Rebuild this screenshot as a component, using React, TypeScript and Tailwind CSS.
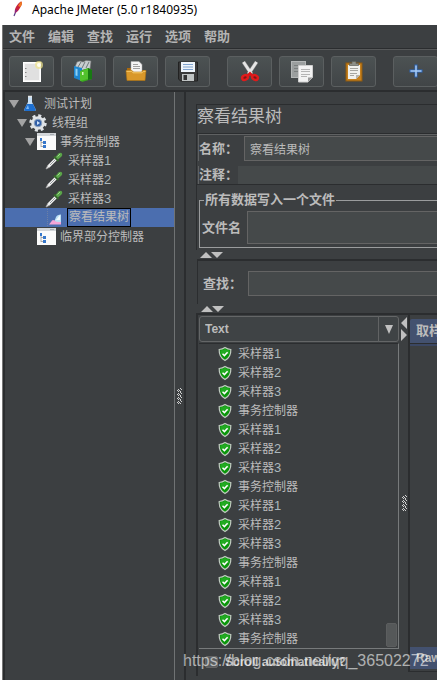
import React, { Fragment } from 'react'

interface TreeItem {
    label: string
    num?: string
    depth: number
    icon: 'flask' | 'gear' | 'controller' | 'dropper' | 'chart'
    open?: boolean
    selected?: boolean
}

const indents = ['pl-1', 'pl-3', 'pl-5', 'pl-7']

const treeItems: TreeItem[] = [
    { label: '测试计划', depth: 0, icon: 'flask', open: true },
    { label: '线程组', depth: 1, icon: 'gear', open: true },
    { label: '事务控制器', depth: 2, icon: 'controller', open: true },
    { label: '采样器', num: '1', depth: 3, icon: 'dropper' },
    { label: '采样器', num: '2', depth: 3, icon: 'dropper' },
    { label: '采样器', num: '3', depth: 3, icon: 'dropper' },
    { label: '察看结果树', depth: 3, icon: 'chart', selected: true },
    { label: '临界部分控制器', depth: 2, icon: 'controller' },
]

const samplers = [
    { label: '采样器', num: '1' },
    { label: '采样器', num: '2' },
    { label: '采样器', num: '3' },
    { label: '事务控制器', num: '' },
]
const results = [...samplers, ...samplers, ...samplers, ...samplers]

const menus = ['文件', '编辑', '查找', '运行', '选项', '帮助']

const FeatherIcon = () => (
    <svg width="12" height="16" viewBox="0 0 12 16" aria-hidden="true">
        <path d="M2 15 L4 10" stroke="#5b3a86" strokeWidth="1.2" />
        <path d="M3 12 C2 8 5 3 9 0.5 C10.500 1 10 4 8.500 6 C7 9 5.500 11 3 12Z" fill="#c8203c" />
        <path d="M6 5 C7 3 8 1.500 9 0.500 C10.500 1 10 4 8.500 6Z" fill="#ee7b22" />
        <path d="M3 12 C2.700 10.500 3 9 3.600 8 L5.500 9.800Z" fill="#8c2a86" />
    </svg>
)

const NewIcon = () => (
    <svg width="22" height="24" viewBox="0 0 22 24" aria-hidden="true">
        <rect x="2.500" y="3.500" width="17" height="19" fill="#f4f4f4" stroke="#fff" />
        <rect x="4" y="5" width="14" height="16" fill="#e0e0e0" />
        <path d="M4 9.500h1.500M4 13.500h1.500M4 17.500h1.500" stroke="#888" />
        <circle cx="18" cy="6" r="4" fill="#f0e48c" opacity=".7" />
        <circle cx="18" cy="6" r="2" fill="#fffef0" />
    </svg>
)

const TemplatesIcon = () => (
    <svg width="22" height="24" viewBox="0 0 22 24" aria-hidden="true">
        <path d="M2 8 L4 3 L7 2 L10 3 L13 1.500 L18 2 L17 10 L3 12Z" fill="#c9ced0" stroke="#777" strokeWidth=".6" />
        <path d="M5 8 L8 3 M9 9 L12 3 M13 9 L16 3" stroke="#6f7678" />
        <path d="M1 7 L9 9 V22 L1 19Z" fill="#1e86cf" />
        <path d="M2.500 9.500 L4.500 10 V17 L2.500 16.400Z" fill="#8bd0f5" />
        <path d="M7 12 L15 9 L19 11 V20 L9 23 L7 21Z" fill="#39a81f" />
        <path d="M7 12.500 L15 9.500 V20 L7 22Z" fill="#52c22c" />
        <path d="M9 13 h1.500 v3 h-1.500z" fill="#d9f7c4" />
        <path d="M15 9 L19 11 V20 L15 21Z" fill="#187a12" />
    </svg>
)

const OpenIcon = () => (
    <svg width="22" height="24" viewBox="0 0 22 24" aria-hidden="true">
        <path d="M2 9 h5 l1 2 h12 v10 h-18z" fill="#a9690f" />
        <path d="M6 2.500 h8 l3 3 v9 h-11z" fill="#f5f5f5" stroke="#aaa" strokeWidth=".5" />
        <path d="M8 5.500h5M8 7.500h7M8 9.500h7" stroke="#8a8a8a" strokeWidth=".8" />
        <path d="M1 11.500 h6 l1.500 1.500 h8 l1.500 -1.500 h3 l-1 10 h-18z" fill="#d9982a" stroke="#b6750f" strokeWidth=".6" />
        <path d="M1.500 12.300 h5 l1.500 1.500 h9 l1.500 -1.500 h2" fill="none" stroke="#f5cc70" />
    </svg>
)

const SaveIcon = () => (
    <svg width="22" height="24" viewBox="0 0 22 24" aria-hidden="true">
        <path d="M1.500 3 h19 v19 h-17 l-2-2z" fill="#3a3a3a" stroke="#222" />
        <rect x="4" y="3" width="14" height="10" fill="#eef4fa" />
        <path d="M6 5.500h10M6 8h10M6 10.500h10" stroke="#7ea2ce" />
        <rect x="5" y="15" width="12" height="7" fill="#bfc3c3" />
        <rect x="6.500" y="16" width="3.500" height="5" fill="#333" />
    </svg>
)

const CutIcon = () => (
    <svg width="22" height="24" viewBox="0 0 22 24" aria-hidden="true">
        <path d="M4.500 3 L12.500 15 M17.500 3 L9.500 15" stroke="#8b8b8b" strokeWidth="3.800" />
        <path d="M4.500 3 L12.500 15 M17.500 3 L9.500 15" stroke="#e6e6e6" strokeWidth="2.800" />
        <path d="M8.500 17 L11 14.500 L13.500 17" stroke="#d81818" strokeWidth="3" fill="none" />
        <ellipse cx="6" cy="18.500" rx="3" ry="2.300" transform="rotate(-28 6 18.500)" fill="#7c1717" stroke="#e01b1b" strokeWidth="2.400" />
        <ellipse cx="16" cy="18.500" rx="3" ry="2.300" transform="rotate(28 16 18.500)" fill="#7c1717" stroke="#e01b1b" strokeWidth="2.400" />
    </svg>
)

const CopyIcon = () => (
    <svg width="24" height="24" viewBox="0 0 24 24" aria-hidden="true">
        <rect x="1.500" y="2.500" width="14" height="16" fill="#9b9f9f" stroke="#b4b7b7" />
        <path d="M4 6.500h9M4 9.500h4M4 12.500h4" stroke="#7b7f7f" />
        <path d="M8.500 6.500 h14 v12 l-4.500 4.500 h-9.500z" fill="#f3f3f3" stroke="#cfcfcf" />
        <path d="M11 10.500h9M11 12.500h9M11 15.500h9M11 17.500h6" stroke="#b5b5b5" />
        <path d="M22.500 18.500 h-4.500 v4.500z" fill="#9a9a9a" />
    </svg>
)

const PasteIcon = () => (
    <svg width="20" height="24" viewBox="0 0 20 24" aria-hidden="true">
        <rect x="2" y="4" width="16" height="18" fill="#c5801d" stroke="#8e5a10" />
        <path d="M4 6 h12 v10 l-4 4 h-8z" fill="#f0f0ec" />
        <path d="M6 9.500h8M6 11.500h8M6 14.500h7M6 16.500h4" stroke="#a5a5a0" />
        <path d="M16 16 h-4 v4z" fill="#b3b3ae" />
        <path d="M5.500 6.500 v-2 h2.500 v-2 h4 v2 h2.500 v2z" fill="#8e9088" stroke="#5e605a" strokeWidth=".7" />
    </svg>
)

const PlusIcon = () => (
    <svg width="14" height="14" viewBox="0 0 14 14" aria-hidden="true">
        <path d="M5.500 .5h3v5h5v3h-5v5h-3v-5h-5v-3h5z" fill="#2d66b8" />
        <path d="M7 1.500v11M1.500 7h11" stroke="#a9ccf3" strokeWidth="1.500" />
    </svg>
)

const toolGroups = [
    [
        { name: '新建', icon: <NewIcon /> },
        { name: '模板', icon: <TemplatesIcon /> },
        { name: '打开', icon: <OpenIcon /> },
        { name: '保存', icon: <SaveIcon /> },
    ],
    [
        { name: '剪切', icon: <CutIcon /> },
        { name: '复制', icon: <CopyIcon /> },
        { name: '粘贴', icon: <PasteIcon /> },
    ],
    [{ name: '展开', icon: <PlusIcon /> }],
]

const TreeIcon = ({ icon }: { icon: TreeItem['icon'] }) => {
    switch (icon) {
        case 'flask':
            return (
                <svg width="14" height="18" viewBox="0 0 14 18" aria-hidden="true">
                    <path d="M5 2 h4 v5 l3.500 7 q.8 2 -1.500 2 h-8 q-2.300 0 -1.500 -2 l3.500 -7z" fill="#c7dff5" />
                    <path d="M4 9 h6 l2.500 5 q.8 2 -1.500 2 h-8 q-2.300 0 -1.500 -2z" fill="#1d6fd0" />
                    <path d="M5 10 l-2 4 h3z" fill="#7db8f2" />
                    <path d="M5 1.500h4" stroke="#e6e6e6" strokeWidth="1.500" />
                </svg>
            )
        case 'gear':
            return (
                <svg width="18" height="18" viewBox="0 0 18 18" aria-hidden="true">
                    <circle cx="9" cy="9" r="7.300" fill="none" stroke="#dfe3e6" strokeWidth="2.800" strokeDasharray="3 2.730" />
                    <circle cx="9" cy="9" r="6.800" fill="#dfe3e6" />
                    <circle cx="9" cy="9" r="3.800" fill="#2f5ea8" stroke="#8ba1bd" />
                    <path d="M8 7 L11 9 L8 11Z" fill="#cfe3fa" />
                </svg>
            )
        case 'controller':
            return (
                <svg width="19" height="17" viewBox="0 0 19 17" aria-hidden="true">
                    <rect width="19" height="17" fill="#fbfbfb" />
                    <rect width="19" height="3" fill="#d3d6d9" />
                    <path d="M13 1.500h4" stroke="#a7adb2" />
                    <path d="M4 6v8M4 9.500h4M4 13.500h4" stroke="#999" strokeWidth=".8" />
                    <rect x="3" y="5" width="2" height="3" fill="#3677cb" />
                    <rect x="6" y="8" width="3" height="3" fill="#3677cb" />
                    <rect x="6" y="12" width="3" height="3" fill="#3677cb" />
                </svg>
            )
        case 'dropper':
            return (
                <svg width="18" height="18" viewBox="0 0 18 18" aria-hidden="true">
                    <path d="M1 17 L3 13 L10 6 L12 8 L5 15Z" fill="#f2f4f4" stroke="#aaa" strokeWidth=".8" />
                    <path d="M5 13 L10.500 7.500" stroke="#7c8284" strokeWidth=".8" />
                    <path d="M9 4.500 L13.500 9" stroke="#35662b" strokeWidth="2" />
                    <path d="M10.500 5 L13.500 1.500 Q15 0 16.800 1.300 Q18 3 16.500 4.500 L13 7.500Z" fill="#5aa549" />
                    <path d="M12.500 4.500 L15 2" stroke="#a2da8e" />
                </svg>
            )
        default:
            return (
                <svg width="15" height="17" viewBox="0 0 15 17" aria-hidden="true">
                    <path d="M.5 0v17" stroke="#6c7fa6" strokeDasharray="1 1" />
                    <path d="M7 13 L9 8 Q10 5.500 14 5.500 V13Z" fill="#b9dff5" />
                    <path d="M9 11 L13 6 V11Z" fill="#f3fbff" />
                    <path d="M2 15.500 L4 13 Q5.500 10 7.500 11.500 Q9 13.500 14 13 V15.500Z" fill="#f3a5d8" />
                </svg>
            )
    }
}

const ShieldIcon = () => (
    <svg width="14" height="16" viewBox="0 0 14 16" aria-hidden="true">
        <path d="M7 1.500 Q9.500 3.200 12.800 3.500 Q13.200 11 7 14.500 Q.8 11 1.200 3.500 Q4.500 3.200 7 1.500Z" fill="#0a960a" stroke="#c3cbc3" strokeWidth="1.200" />
        <path d="M7 3 Q9 4.400 11.500 4.600 Q11.600 6.500 11 8 L3 8 Q2.400 6.500 2.500 4.600 Q5 4.400 7 3Z" fill="#22aa22" />
        <path d="M4.500 7.800 L6.400 9.600 L9.600 6.200" fill="none" stroke="#fff" strokeWidth="1.500" />
    </svg>
)

// one-touch arrows of a horizontal split pane
const SplitArrows = () => (
    <svg width="24" height="6" viewBox="0 0 24 6" aria-hidden="true">
        <path d="M0 6 L6 0 L12 6Z M11 0 H23 L17 6Z" fill="#c0c0c0" />
    </svg>
)

const Grip = () => (
    <svg width="5" height="16" viewBox="0 0 5 16" shapeRendering="crispEdges" aria-hidden="true">
        {[0, 4, 8, 12].map((y) => (
            <path key={y} d={`M3 ${y}h1v1h-1z M1 ${y + 1}h1v1h-1z M4 ${y + 1}h1v1h-1z M2 ${y + 2}h1v1h-1z M0 ${y + 2}h1v1h-1z M3 ${y + 3}h1v1h-1z M1 ${y + 3}h1v1h-1z`} fill="#d0d0d0" />
        ))}
    </svg>
)

const ItemLabel = ({ label, num }: { label: string; num?: string }) => (
    <Fragment>
        {label}
        {num && <span className="text-[13px] text-[#aab8bd]">{num}</span>}
    </Fragment>
)

const Toolbar = () => (
    <div className="flex h-[41px] shrink-0 items-center gap-[17px] overflow-hidden border-t border-[#57595a] pl-[6px] pt-[2px]">
        {toolGroups.map((group, i) => (
            <div key={i} className="flex shrink-0 gap-[7px]">
                {group.map((tool) => (
                    <button key={tool.name} aria-label={tool.name} className="flex h-[31px] w-[45px] items-center justify-center rounded-[3px] border border-[#5b5f60] bg-linear-to-b from-[#4c5253] to-[#414547]">
                        {tool.icon}
                    </button>
                ))}
            </div>
        ))}
    </div>
)

const TestPlanTree = () => (
    <nav className="w-[172px] shrink-0 border-l-2 border-r border-l-[#2b2d2f] border-r-[#707374] pt-[2px]">
        <ul>
            {treeItems.map((item, i) => (
                <li key={i} className={`flex h-[19px] items-center whitespace-nowrap ${indents[item.depth]} ${item.selected ? 'bg-[#4b6eaf]' : ''}`}>
                    <span className="w-[11px] shrink-0">
                        {item.open && (
                            <svg width="10" height="8" viewBox="0 0 10 8" aria-hidden="true"><path d="M0 0H10L5 8Z" fill="#a3a3a3" /></svg>
                        )}
                    </span>
                    <span className="flex w-5 shrink-0 justify-center"><TreeIcon icon={item.icon} /></span>
                    <span className={item.selected ? 'ml-[3px] h-[19px] border border-black px-px leading-[17px]' : 'ml-[4px]'}>
                        <ItemLabel label={item.label} num={item.num} />
                    </span>
                </li>
            ))}
        </ul>
    </nav>
)

const inputStyle = 'min-w-0 flex-1 border border-r-0 border-[#646464] bg-[#45494a] px-[5px] outline-none'

const Results = () => (
    <div className="flex min-h-0 flex-1 border-l-2 border-t-2 border-[#2b2d2f]">
        <div className="flex w-[201px] shrink-0 flex-col pl-px pt-px">
            <div className="relative flex">
                <select aria-label="Renderer" className="h-[26px] w-full appearance-none rounded-[3px] border border-[#646667] bg-[#3f4345] pl-[5px] text-[12px] font-bold text-[#bbb]">
                    <option>Text</option>
                </select>
                <span className="pointer-events-none absolute inset-y-0 right-0 flex w-[21px] items-center justify-center border-l border-[#616364] pt-px">
                    <svg width="8" height="9" viewBox="0 0 8 9" aria-hidden="true"><path d="M0 0H8L4 9Z" fill="#c0c0c0" /></svg>
                </span>
            </div>
            <div className="mt-px flex justify-between border-b border-r border-t border-b-[#777a7b] border-r-[#777a7b] border-t-[#2b2d2f]">
                <ul className="pl-[19px]">
                    {results.map((r, i) => (
                        <li key={i} className="flex h-[19px] items-center gap-[6px]">
                            <ShieldIcon />
                            <span><ItemLabel label={r.label} num={r.num} /></span>
                        </li>
                    ))}
                </ul>
                <div className="mb-px mr-px h-6 w-[11px] self-end rounded-[2px] border border-[#5c5e5f] bg-[#555859]" />
            </div>
            <label className="flex items-center gap-[7px] pl-[6px] pt-1 text-[12px] font-bold">
                <input type="checkbox" className="h-3 w-[13px] appearance-none rounded-[2px] border border-[#666] bg-[#5a5d5f]" />
                Scroll automatically?
            </label>
        </div>
        <div className="flex w-[9px] shrink-0 flex-col items-center pl-px pt-[2px]">
            <svg width="6" height="24" viewBox="0 0 6 24" aria-hidden="true"><path d="M6 0V12L0 6Z M0 12V24L6 18Z" fill="#c0c0c0" /></svg>
            <div className="flex flex-1 items-center pb-3"><Grip /></div>
        </div>
        <div className="flex min-w-0 flex-1 flex-col overflow-hidden">
            <div className="flex h-[357px] shrink-0 flex-col justify-between border-b border-l-2 border-[#2b2d2f]">
                <div className="border-b-2 border-[#3b4763] pt-[4px]">
                    <button className="h-[25px] w-full overflow-hidden whitespace-nowrap rounded-tl-[2px] border-b border-[#2b2d2f] bg-[#43516f] pl-[6px] text-left text-[13px] font-bold">取样器结果</button>
                </div>
                <button className="mb-[2px] h-[22px] overflow-hidden whitespace-nowrap bg-[#43516f] pl-[6px] text-left text-[12px] font-bold">Raw</button>
            </div>
        </div>
    </div>
)

const App = () => {
    return (
        <div className="relative flex h-screen flex-col overflow-hidden bg-white font-['Liberation_Sans','Noto_Sans_CJK_SC',sans-serif] text-[12px] leading-[18px] text-[#bbb]">
            {/* Title bar */}
            <header className="flex h-[25px] shrink-0 items-start gap-[8px] pl-3 pt-px text-black">
                <FeatherIcon />
                <h1 className="whitespace-nowrap font-['Noto_Sans',sans-serif] text-[12px]">Apache JMeter (5.0 r1840935)</h1>
            </header>

            <div className="ml-[2px] flex min-h-0 flex-1 flex-col border-l border-[#777] bg-[#3c3f41]">
                {/* Menu bar */}
                <div className="flex h-[24px] shrink-0 items-center gap-[13px] border-b border-[#2b2d2f] pl-[6px]">
                    {menus.map((menu) => (
                        <button key={menu} className="shrink-0 text-[13px] font-bold text-[#b4b4b4]">{menu}</button>
                    ))}
                </div>
                <Toolbar />

                <div className="flex min-h-0 flex-1 border-t-2 border-[#2b2d2f]">
                    <TestPlanTree />
                    <div className="flex w-[9px] shrink-0 items-center justify-center pt-5"><Grip /></div>

                    {/* Listener panel */}
                    <main className="flex min-w-0 flex-1 flex-col border-l-2 border-[#2b2d2f] pb-1 pl-[10px] pt-[12px]">
                        <div className="shrink-0 border-l border-t border-[#2b2d2f] pb-[2px]">
                            <h2 className="h-[28px] text-[17px] leading-[24px]">察看结果树</h2>
                            <div className="flex flex-col gap-[5px] border-b border-t border-[#2b2d2f] pl-px">
                                <div className="flex items-center border-l border-t border-[#5f6162] pt-px">
                                    <label htmlFor="name" className="w-[45px] text-[13px] font-bold">名称：</label>
                                    <input id="name" defaultValue="察看结果树" className={`h-[25px] ${inputStyle}`} />
                                </div>
                                <div className="flex items-center border-l border-[#5f6162]">
                                    <label htmlFor="comment" className="w-[39px] whitespace-nowrap text-[13px] font-bold">注释：</label>
                                    <input id="comment" className="h-[18px] min-w-0 flex-1 bg-[#45494a] outline-none" />
                                </div>
                            </div>
                            <fieldset className="ml-[2px] mt-[8px] min-w-0 border border-r-0 border-[#9a9c9d] pb-[3px]">
                                <legend className="ml-1 px-px text-[13px] font-bold leading-[14px]">所有数据写入一个文件</legend>
                                <div className="flex items-center pl-[2px] pt-[4px]">
                                    <label htmlFor="file" className="w-[45px] text-[13px] font-bold">文件名</label>
                                    <input id="file" className={`h-[33px] ${inputStyle}`} />
                                </div>
                            </fieldset>
                        </div>
                        <div className="flex h-[9px] shrink-0 items-center pl-1"><SplitArrows /></div>

                        <div className="ml-px shrink-0 border-l border-t-2 border-[#2b2d2f] pb-[8px] pt-[10px]">
                            <div className="flex items-center pl-[5px]">
                                <label htmlFor="search" className="w-[45px] text-[13px] font-bold">查找：</label>
                                <input id="search" className={`h-[25px] ${inputStyle}`} />
                            </div>
                        </div>
                        <div className="flex h-[9px] shrink-0 items-center pl-[5px]"><SplitArrows /></div>
                        <Results />
                    </main>
                </div>
            </div>

            {/* Watermark */}
            <span className="pointer-events-none absolute bottom-[10px] left-[183px] whitespace-nowrap text-[16px] text-white/60">https://blog.csdn.net/qq_36502272</span>
        </div>
    )
}

export default App
